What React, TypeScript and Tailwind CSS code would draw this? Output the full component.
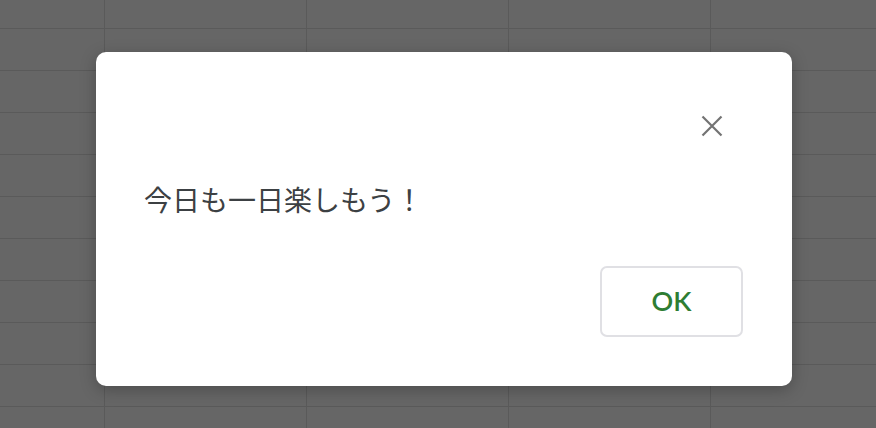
const rows = [29, 42, 42, 42, 42, 42, 42, 42, 42, 42, 42]
const cols = [105, 202, 202, 202, 202]

export default function App() {
  return (
    <div className="relative h-[428px] w-[876px] overflow-hidden bg-[#666666]">
      {/* spreadsheet behind the overlay */}
      <div className="flex flex-col">
        {rows.map((h, r) => (
          <div key={r} className="flex shrink-0" style={{ height: h }}>
            {cols.map((w, c) => (
              <div
                key={c}
                className="shrink-0 border-b border-r border-[#5a5a5a]"
                style={{ width: w }}
              />
            ))}
          </div>
        ))}
      </div>

      {/* Dialog */}
      <div className="absolute left-[96px] top-[52px] flex h-[334px] w-[696px] flex-col rounded-[10px] bg-white shadow-[0_4px_16px_rgba(0,0,0,0.25)]">
        <div className="flex justify-end pr-[69px] pt-[63px]">
          <button className="flex h-[22px] w-[22px] items-center justify-center">
            <svg viewBox="0 0 22 22" className="h-[22px] w-[22px]" fill="none" stroke="#737373" strokeWidth={2.2}>
              <path d="M1.5 1.5 20.5 20.5M20.5 1.5 1.5 20.5" />
            </svg>
          </button>
        </div>

        <p className="mt-[42px] pl-[48px] text-[28px] leading-[40px] text-[#3c4043] [font-family:'Noto_Sans_CJK_JP',sans-serif]">
          今日も一日楽しもう！
        </p>

        <div className="mt-auto flex justify-end pb-[49px] pr-[49px]">
          <button className="flex h-[71px] w-[143px] items-center justify-center rounded-[7px] border-2 border-[#e0e0e4] bg-white text-[27px] font-semibold text-[#2e7d32] [font-family:Lato,sans-serif]">
            OK
          </button>
        </div>
      </div>
    </div>
  )
}
